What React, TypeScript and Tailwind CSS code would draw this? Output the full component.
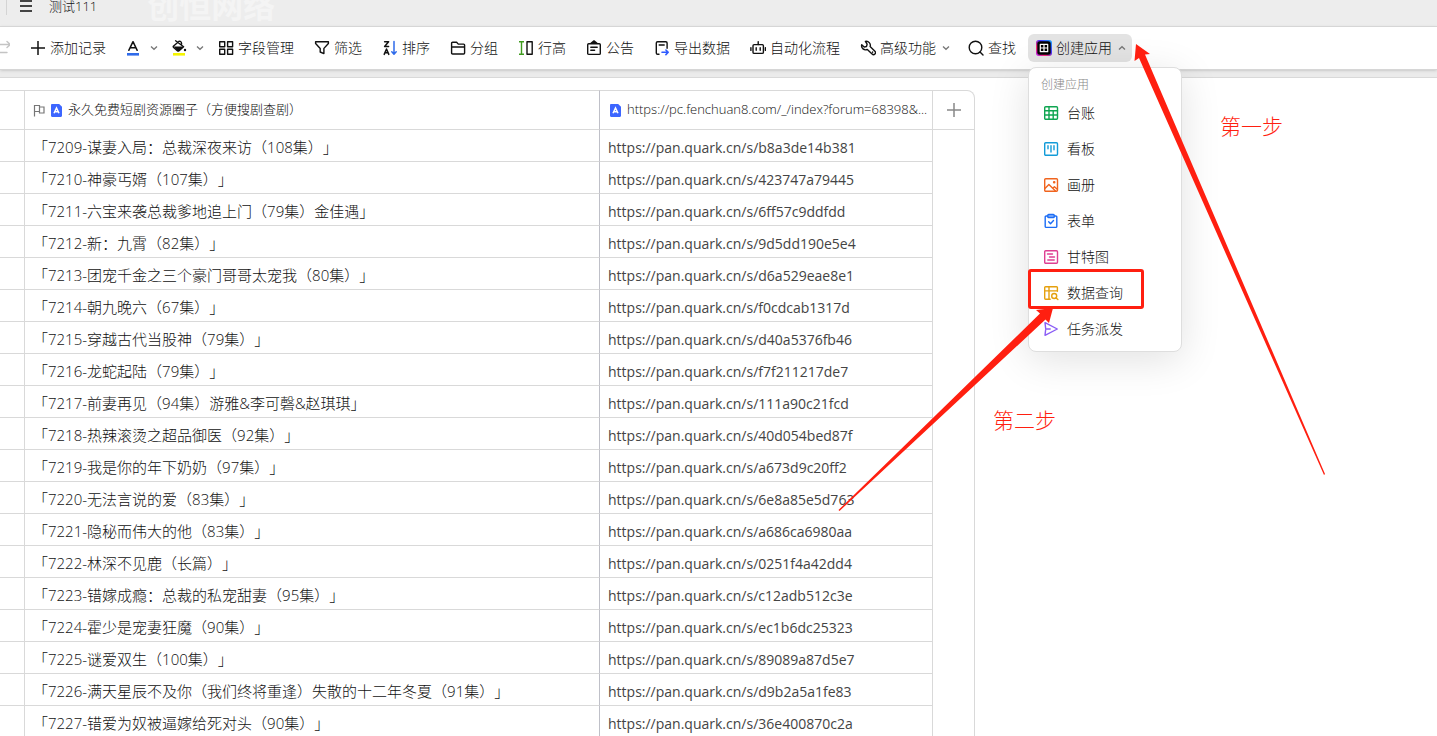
import type { ReactNode } from "react";

const rows = [
  ["「7209-谋妻入局：总裁深夜来访（108集）」", "b8a3de14b381"],
  ["「7210-神豪丐婿（107集）」", "423747a79445"],
  ["「7211-六宝来袭总裁爹地追上门（79集）金佳遇」", "6ff57c9ddfdd"],
  ["「7212-新：九霄（82集）」", "9d5dd190e5e4"],
  ["「7213-团宠千金之三个豪门哥哥太宠我（80集）」", "d6a529eae8e1"],
  ["「7214-朝九晚六（67集）」", "f0cdcab1317d"],
  ["「7215-穿越古代当股神（79集）」", "d40a5376fb46"],
  ["「7216-龙蛇起陆（79集）」", "f7f211217de7"],
  ["「7217-前妻再见（94集）游雅&李可磬&赵琪琪」", "111a90c21fcd"],
  ["「7218-热辣滚烫之超品御医（92集）」", "40d054bed87f"],
  ["「7219-我是你的年下奶奶（97集）」", "a673d9c20ff2"],
  ["「7220-无法言说的爱（83集）」", "6e8a85e5d763"],
  ["「7221-隐秘而伟大的他（83集）」", "a686ca6980aa"],
  ["「7222-林深不见鹿（长篇）」", "0251f4a42dd4"],
  ["「7223-错嫁成瘾：总裁的私宠甜妻（95集）」", "c12adb512c3e"],
  ["「7224-霍少是宠妻狂魔（90集）」", "ec1b6dc25323"],
  ["「7225-谜爱双生（100集）」", "89089a87d5e7"],
  ["「7226-满天星辰不及你（我们终将重逢）失散的十二年冬夏（91集）」", "d9b2a5a1fe83"],
  ["「7227-错爱为奴被逼嫁给死对头（90集）」", "36e400870c2a"],
];

function Icon({ children, className = "h-4 w-4" }: { children: ReactNode; className?: string }) {
  return (
    <svg
      viewBox="0 0 16 16"
      className={`shrink-0 ${className}`}
      fill="none"
      stroke="currentColor"
      strokeWidth="1.4"
      strokeLinejoin="round"
      strokeLinecap="round"
      aria-hidden="true"
    >
      {children}
    </svg>
  );
}

function Chevron({ up = false }: { up?: boolean }) {
  return (
    <svg viewBox="0 0 8 8" className="h-2 w-2 shrink-0 text-[#777]" fill="none" stroke="currentColor" strokeWidth="1.3" aria-hidden="true">
      <path d={up ? "M1 5.5 4 2.7 7 5.5" : "M1 2.5 4 5.3 7 2.5"} />
    </svg>
  );
}

const tools = [
  {
    label: "字段管理",
    icon: (
      <Icon>
        <rect x="1.7" y="1.7" width="5" height="5" />
        <rect x="9.6" y="1.7" width="5" height="5" />
        <rect x="1.7" y="9.3" width="5" height="5" />
        <rect x="9.6" y="9.3" width="5" height="5" />
      </Icon>
    ),
  },
  {
    label: "筛选",
    icon: (
      <Icon>
        <path d="M1.6 1.8h12.8v1.7L9.9 8.4v5.2L6.2 12V8.4L1.6 3.5z" />
      </Icon>
    ),
  },
  {
    label: "排序",
    icon: (
      <Icon>
        <path strokeWidth="1.5" d="M2.6 1.8h4L2.6 6.4h4M2.2 14.4l2.3-5.4 2.3 5.4M3 12.7h3" />
        <path stroke="#2f6bea" strokeWidth="1.5" d="M12 1.4v12.4M9.8 11.8l2.2 2.4 2.2-2.4" />
      </Icon>
    ),
  },
  {
    label: "分组",
    icon: (
      <Icon>
        <path d="M1.6 13V3.2c0-.6.4-1 1-1h4l1.7 1.9h5.3c.6 0 1 .4 1 1V13c0 .6-.4 1-1 1h-11c-.6 0-1-.4-1-1zM1.6 7h13" />
      </Icon>
    ),
  },
  {
    label: "行高",
    icon: (
      <Icon>
        <path stroke="#3f9b1e" strokeLinecap="butt" d="M1 1.7h5M1 14.3h5M3.5 1.7v12.6" />
        <rect x="9" y="1.7" width="5.2" height="12.6" />
      </Icon>
    ),
  },
  {
    label: "公告",
    icon: (
      <Icon>
        <rect x="1.7" y="3.7" width="12.6" height="10.7" rx="1" />
        <path fill="currentColor" d="M5 3.2 8 .9l3 2.3z" />
        <path d="M4.8 7.2h6.4M4.8 10.3h3.8" />
      </Icon>
    ),
  },
  {
    label: "导出数据",
    icon: (
      <Icon>
        <path d="M5 14.2H3.600c-.8 0-1.300-.5-1.300-1.300V3c0-.8.5-1.300 1.300-1.300h8.200c.8 0 1.300.5 1.300 1.300v5.200M5.200 5h5" />
        <path stroke="#2f5bff" strokeWidth="1.6" d="M8 12.300h6M11.900 10l2.300 2.300-2.300 2.300" />
      </Icon>
    ),
  },
  {
    label: "自动化流程",
    icon: (
      <Icon>
        <rect x="3" y="4.6" width="10.4" height="8.8" rx="1.2" />
        <path d="M8.2 4.600V1.600M.9 7.600v2.800M15.400 7.600v2.800M6.200 7.800v2.400M10.200 7.800v2.400" />
      </Icon>
    ),
  },
];

const apps = [
  {
    label: "台账",
    color: "text-[#0fa551]",
    icon: <><rect x="1.7" y="1.7" width="12.8" height="12.6" rx="1" /><path d="M1.7 5.8h12.8M1.7 10h12.8M6 1.7v12.6M10.2 5.8v8.5" /></>,
  },
  {
    label: "看板",
    color: "text-[#129bd8]",
    icon: <><rect x="1.7" y="1.7" width="12.8" height="12.6" rx="1" /><path d="M5 4.8v3M8 4.8v6.2M11 4.8v4" /></>,
  },
  {
    label: "画册",
    color: "text-[#f0641e]",
    icon: <><rect x="1.7" y="1.7" width="12.8" height="12.6" rx="1" /><path d="m1.9 11.4 4-4 6.6 6.6M9.8 11.2l1.6-1.5 2.9 2.6" /><circle cx="11.2" cy="5.2" r=".6" fill="currentColor" /></>,
  },
  {
    label: "表单",
    color: "text-[#1c6df5]",
    icon: <><path d="M4.8 3H3.2c-.6 0-1 .4-1 1v9.400c0 .6.4 1 1 1h9.600c.6 0 1-.4 1-1V4c0-.6-.4-1-1-1h-1.600" /><rect x="4.8" y="1.5" width="6.4" height="3" rx=".8" fill="#8bb5fa" /><path d="m5.7 8.8 1.8 1.9 3-3.2" /></>,
  },
  {
    label: "甘特图",
    color: "text-[#de3f92]",
    icon: <><rect x="1.7" y="1.7" width="12.8" height="12.6" rx="1" /><path d="M4.5 5h5M6.5 8h5M4.8 11h6.4" /></>,
  },
  {
    label: "数据查询",
    color: "text-[#e5a00d]",
    marked: true,
    icon: <><path d="M7.2 14.2H2.600c-.6 0-.9-.3-.9-.9V2.600c0-.6.3-.9.9-.9h10.900c.6 0 .9.3.9.9v3.600M1.700 5.900h12.700M6 1.700v12.500" /><circle cx="11.2" cy="11" r="2.5" /><path d="m13.1 12.9 1.8 1.7" /></>,
  },
  {
    label: "任务派发",
    color: "text-[#8a5cf5]",
    icon: <path d="M2.600 6.900 2 1.700 14.300 8 2 14.300l.6-5.200M2.600 8h4.600" />,
  },
];

function FieldBadge() {
  return (
    <svg viewBox="0 0 11 13" className="h-[13px] w-[11px] shrink-0" aria-hidden="true">
      <path fill="#3d66ff" d="M1.2 0h7L11 2.8v9c0 .7-.5 1.2-1.2 1.2H1.200C.5 13 0 12.500 0 11.800V1.200C0 .5.5 0 1.200 0z" />
      <path fill="none" stroke="#fff" strokeWidth="1.500" d="M3 9.300 5.500 4 8 9.300M4 7.800h3" />
    </svg>
  );
}

function Toolbar() {
  const button = "flex h-7 shrink-0 items-center gap-1 rounded-md px-2 hover:bg-gray-100";
  return (
    <div className="relative z-10 h-[44px] border-y border-[#d6d6d6] bg-white shadow-sm">
      <div role="toolbar" className="-ml-3.5 flex h-[42px] items-center gap-1 text-sm whitespace-nowrap text-[#111]">
        <button aria-label="重做" className={`${button} text-[#c4c4c4]`}>
          <Icon><path d="M16 4.500H6C4 4.500 3 6 3 8.500s1 4 3 4h7M13 1.500l3.300 3-3.300 3" /></Icon>
        </button>
        <button className={button}>
          <Icon><path strokeLinecap="butt" strokeWidth="1.500" d="M1 8h14M8 1v14" /></Icon>
          添加记录
        </button>
        <button aria-label="文字颜色" className="flex h-7 items-center gap-2 rounded-md pr-0.5 pl-2">
          <Icon>
            <path strokeWidth="1.500" d="m2.800 10.300 4.200-8.600 4.200 8.600M4.300 7.700h5.400" />
            <path stroke="#2f6bea" strokeWidth="2.600" strokeLinecap="butt" d="M1 14.300h12" />
          </Icon>
          <Chevron />
        </button>
        <button aria-label="填充颜色" className="flex h-7 items-center gap-2 rounded-md pr-0.5 pl-2">
          <Icon>
            <path d="m3.600.8 8 5.900-4.500 3.900c-.6.500-1.200.5-1.800 0L1.600 7.500c-.5-.5-.5-1 0-1.500l5.200-4.500M6.800 1.500c1-.8 3 0 2.800 2.800" />
            <path fill="currentColor" stroke="none" d="M1.500 6.500h10.400l-4.700 4.200c-.6.5-1.200.5-1.800 0z" />
            <circle cx="13" cy="10" r="1.200" fill="currentColor" stroke="none" />
            <path stroke="#f5f500" strokeWidth="2.600" strokeLinecap="butt" d="M1 14.300h12" />
          </Icon>
          <Chevron />
        </button>
        {tools.map((tool) => (
          <button key={tool.label} className={button}>
            {tool.icon}
            {tool.label}
          </button>
        ))}
        <button className="flex h-7 shrink-0 items-center gap-1 rounded-md pr-1.5 pl-2">
          <Icon>
            <path d="M5.400 1.400a4 4 0 0 1 4.700 5.200l4.800 4.700a1.900 1.900 0 0 1-2.800 2.800L7.300 9.400a4 4 0 0 1-5.600-4.600l2.500 2.300 2.300-.6.600-2.300z" />
            <path d="M12.600 12v.2" />
          </Icon>
          <span className="mr-0.5">高级功能</span>
          <Chevron />
        </button>
        <button className={button}>
          <Icon><circle cx="7.500" cy="7.500" r="6.300" /><path d="m12 12 3 3" /></Icon>
          查找
        </button>
        <div className="relative">
          <button aria-expanded="true" aria-haspopup="menu" className="flex h-7 items-center gap-1 rounded-md bg-[#e3e3e3] pr-1.5 pl-2">
            <svg viewBox="0 0 16 16" className="h-4 w-4" aria-hidden="true">
              <defs>
                <linearGradient id="app-edge" x1="0" y1="1" x2="1" y2="0">
                  <stop offset="0" stopColor="#b01cff" />
                  <stop offset=".3" stopColor="#ff2a6a" />
                  <stop offset=".6" stopColor="#4a35ff" />
                  <stop offset="1" stopColor="#18b0ff" />
                </linearGradient>
              </defs>
              <rect width="16" height="16" rx="3" fill="url(#app-edge)" />
              <rect x="1.300" y="1.300" width="13.400" height="13.400" rx="2.500" fill="#000" />
              <path fill="none" stroke="#fff" strokeWidth="1.200" strokeLinejoin="round" d="M4.300 4.300h7.400v7.400H4.300zM8 4.300v7.400M4.300 8h7.400" />
            </svg>
            <span className="mr-0.5">创建应用</span>
            <Chevron up />
          </button>
          <AppMenu />
        </div>
      </div>
    </div>
  );
}

function AppMenu() {
  return (
    <div role="menu" className="absolute top-full left-0 mt-[5px] w-[154px] rounded-lg border border-[#dedede] bg-white pt-[7px] pb-1 shadow-[0_8px_40px_rgba(0,0,0,0.12)]">
      <div className="px-3 text-xs leading-5 text-[#888]">创建应用</div>
      {apps.map((app) => (
        <div key={app.label} className="relative">
          <button role="menuitem" className="flex h-9 w-full items-center gap-2 px-3.5 hover:bg-gray-50">
            <Icon className={`h-4 w-4 ${app.color}`}>{app.icon}</Icon>
            {app.label}
          </button>
          {app.marked && <div className="absolute -top-1.5 -left-px h-10 w-[116px] rounded-[3px] border-3 border-[#ff1f10]" />}
        </div>
      ))}
    </div>
  );
}

function Sheet() {
  const line = "border-[#d9d9d9]";
  return (
    <table className="w-[975px] table-fixed border-separate border-spacing-0 text-left text-[#222]">
      <colgroup>
        <col className="w-[25px]" />
        <col className="w-[575px]" />
        <col className="w-[333px]" />
        <col className="w-[42px]" />
      </colgroup>
      <thead>
        <tr className="h-10 text-[13px] text-[#111]">
          <th className={`border-y border-r ${line}`} />
          <th className="border-y border-r border-y-[#d9d9d9] border-r-[#bfc0c8] px-2 py-0 font-light">
            <div className="flex items-center gap-1.5">
              <svg viewBox="0 0 12 13" className="h-[13px] w-3 shrink-0" fill="none" stroke="#777" strokeWidth="1.200" aria-hidden="true">
                <path d="M1.500 12.500V1.500h5v6h-5M6.500 3h4.500v6H6.500V7.500" />
              </svg>
              <FieldBadge />
              永久免费短剧资源圈子（方便搜剧查剧）
            </div>
          </th>
          <th className={`border-y border-r py-0 pl-2 font-light ${line}`}>
            <div className="flex items-center gap-1.5 pl-0.5 whitespace-nowrap">
              <FieldBadge />
              https://pc.fenchuan8.com/_/index?forum=68398&amp;...
            </div>
          </th>
          <th className={`rounded-tr-lg border-y border-r p-0 ${line}`}>
            <button aria-label="添加字段" className="flex w-full justify-center text-[#888]">
              <Icon><path strokeLinecap="butt" strokeWidth="1.500" d="M1 8h14M8 1v14" /></Icon>
            </button>
          </th>
        </tr>
      </thead>
      <tbody>
        {rows.map(([title, code]) => (
          <tr key={code} className="h-8 text-[15px] leading-5">
            <td className={`border-r border-b ${line}`} />
            <td className="truncate border-r border-b border-r-[#bfc0c8] border-b-[#d9d9d9] px-2 pt-0.5 pb-0 font-light text-[#111]">{title}</td>
            <td className={`border-r border-b px-2 pt-1 pb-0 text-sm leading-5 font-normal text-[#444] ${line}`}>https://pan.quark.cn/s/{code}</td>
            <td className={`border-r ${line}`} />
          </tr>
        ))}
      </tbody>
    </table>
  );
}

// Red guide marks that lie over the page
function Guide() {
  return (
    <div className="pointer-events-none absolute inset-0 z-20 text-[21px] leading-6 font-light text-[#ff1f10]">
      <svg className="absolute top-0 left-0 h-[520px] w-[1340px]" viewBox="0 0 1340 520" fill="#ff1f10" aria-hidden="true">
        <path d="M1136 44 1150 54 1145 54.500 1325 474 1324 475 1139 58 1134.500 61z" />
        <path d="M1053 308 1049 323 1045.500 319.500 839.500 511 838.500 510 1040 313.500 1036 310z" />
      </svg>
      <p className="absolute top-[114px] left-[1220px]">第一步</p>
      <p className="absolute top-[408px] left-[993px]">第二步</p>
    </div>
  );
}

export default function App() {
  return (
    <div className="relative h-screen overflow-hidden bg-white font-['Open_Sans','Noto_Sans_CJK_SC',sans-serif] font-light [text-spacing-trim:space-all]">
      <header className="flex h-[26px] items-start bg-[#ededed] text-[13px] leading-3 text-[#111]">
        <div className="ml-1.5 h-[15px] w-px bg-[#d4d4d4]" />
        <button aria-label="菜单" className="ml-3 text-[#444]">
          <svg viewBox="0 0 14 12" className="h-3 w-3.5" stroke="currentColor" strokeWidth="1.800" aria-hidden="true">
            <path d="M1 1h12M1 6h12M1 11h12" />
          </svg>
        </button>
        <h1 className="ml-4">测试111</h1>
        <span className="ml-[50px] text-[32px] leading-3 font-bold text-[#f4f4f4]">创恒网络</span>
      </header>
      <Toolbar />
      <main className="border-t-7 border-[#ebebeb]">
        <div className="border-t border-[#d9d9d9] pt-3">
          <Sheet />
        </div>
      </main>
      <Guide />
    </div>
  );
}
